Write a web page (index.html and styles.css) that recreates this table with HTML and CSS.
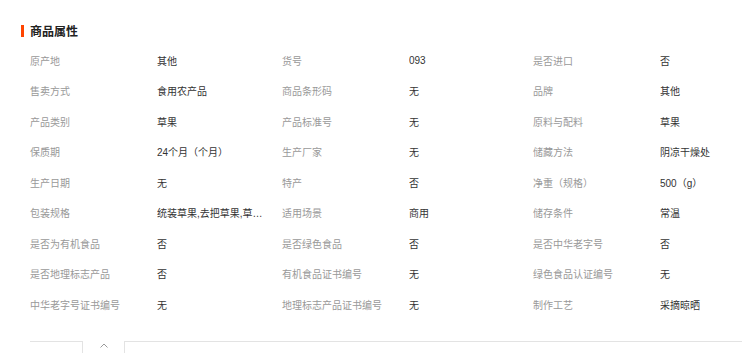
FILE: index.html
```html
<!DOCTYPE html>
<html lang="zh-CN">
<head>
<meta charset="utf-8">
<link rel="stylesheet" href="styles.css">
</head>
<body>
<section class="attrs">
  <h2 class="title"><span class="bar"></span>商品属性</h2>
  <div class="grid">
    <div class="k">原产地</div><div class="v">其他</div>
    <div class="k">货号</div><div class="v">093</div>
    <div class="k">是否进口</div><div class="v">否</div>

    <div class="k">售卖方式</div><div class="v">食用农产品</div>
    <div class="k">商品条形码</div><div class="v">无</div>
    <div class="k">品牌</div><div class="v">其他</div>

    <div class="k">产品类别</div><div class="v">草果</div>
    <div class="k">产品标准号</div><div class="v">无</div>
    <div class="k">原料与配料</div><div class="v">草果</div>

    <div class="k">保质期</div><div class="v">24个月（个月）</div>
    <div class="k">生产厂家</div><div class="v">无</div>
    <div class="k">储藏方法</div><div class="v">阴凉干燥处</div>

    <div class="k">生产日期</div><div class="v">无</div>
    <div class="k">特产</div><div class="v">否</div>
    <div class="k">净重（规格）</div><div class="v">500（g）</div>

    <div class="k">包装规格</div><div class="v">统装草果,去把草果,草果籽</div>
    <div class="k">适用场景</div><div class="v">商用</div>
    <div class="k">储存条件</div><div class="v">常温</div>

    <div class="k">是否为有机食品</div><div class="v">否</div>
    <div class="k">是否绿色食品</div><div class="v">否</div>
    <div class="k">是否中华老字号</div><div class="v">否</div>

    <div class="k">是否地理标志产品</div><div class="v">否</div>
    <div class="k">有机食品证书编号</div><div class="v">无</div>
    <div class="k">绿色食品认证编号</div><div class="v">无</div>

    <div class="k">中华老字号证书编号</div><div class="v">无</div>
    <div class="k">地理标志产品证书编号</div><div class="v">无</div>
    <div class="k">制作工艺</div><div class="v">采摘晾晒</div>
  </div>
  <div class="fold">
    <div class="line short"></div>
    <div class="tab">
      <svg width="8" height="5" viewBox="0 0 8 5"><polyline points="0.5,4.5 4,1 7.5,4.5" fill="none" stroke="#9a9a9a" stroke-width="1"/></svg>
    </div>
    <div class="line long"></div>
  </div>
</section>
</body>
</html>
```

FILE: styles.css
```css
html, body {
  margin: 0;
  padding: 0;
  background: #fff;
}
body {
  font-family: "Noto Sans CJK SC", "Noto Sans", sans-serif;
  color: #333;
  width: 742px;
  height: 353px;
  overflow: hidden;
}
.attrs {
  padding: 21px 0 0 30px;
}
.title {
  position: relative;
  margin: 0;
  font-size: 12px;
  font-weight: bold;
  line-height: 20px;
  height: 20px;
  color: #222;
}
.bar {
  position: absolute;
  left: -9px;
  top: 4px;
  width: 3px;
  height: 12px;
  background: #ff4400;
}
.grid {
  margin-top: 4px;
  display: grid;
  grid-template-columns: 127px 125px 127px 124px 127px 1fr;
  grid-auto-rows: 30.5px;
  font-size: 10px;
  align-items: center;
}
.k {
  color: #999;
  white-space: nowrap;
}
.v {
  font-family: "Liberation Sans", "Noto Sans CJK SC", sans-serif;
  color: #333;
  white-space: nowrap;
  overflow: hidden;
  text-overflow: ellipsis;
  padding-right: 15px;
}
.fold {
  margin-top: 21px;
  display: flex;
  height: 13px;
}
.line {
  border-top: 1px solid #e3e3e3;
}
.short {
  width: 52px;
}
.long {
  flex: 1;
}
.tab {
  width: 43px;
  border-left: 1px solid #e3e3e3;
  border-right: 1px solid #e3e3e3;
  display: flex;
  justify-content: center;
  padding-top: 2px;
  box-sizing: border-box;
}
.tab svg {
  display: block;
}
```
